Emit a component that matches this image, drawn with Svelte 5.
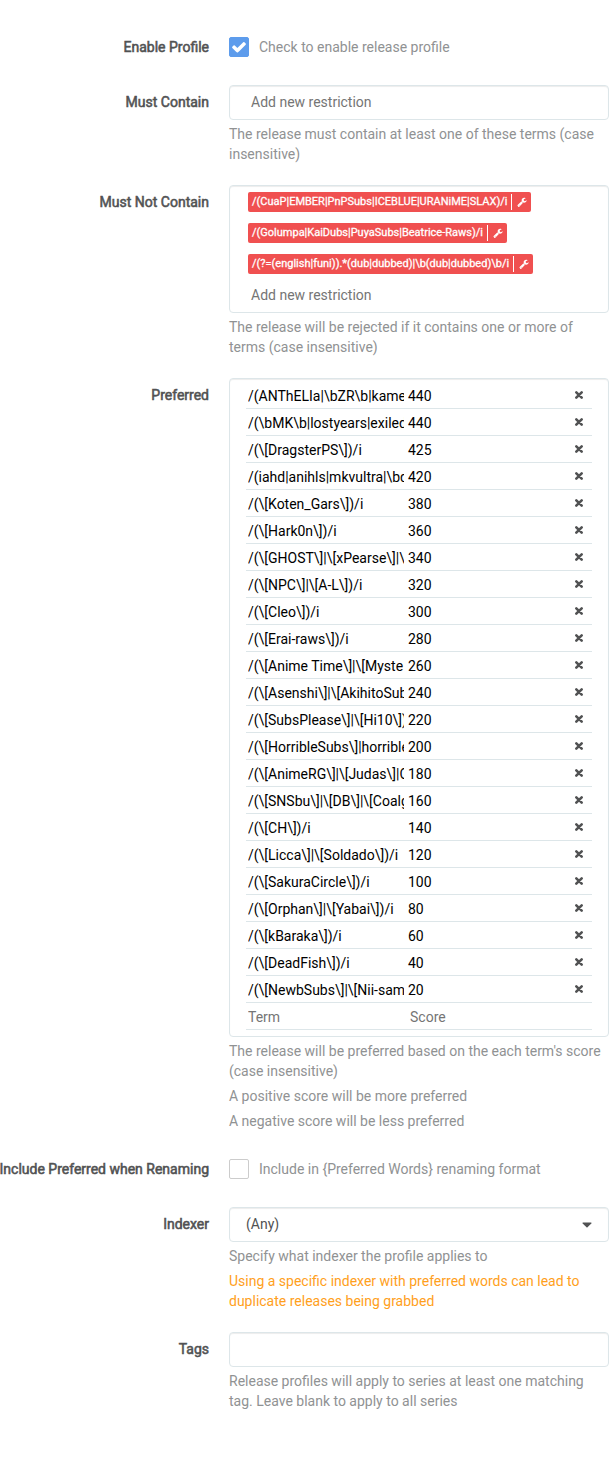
<script>
  const restrictions = [
    '/(CuaP|EMBER|PnPSubs|ICEBLUE|URANiME|SLAX)/i',
    '/(Golumpa|KaiDubs|PuyaSubs|Beatrice-Raws)/i',
    '/(?=(english|funi)).*(dub|dubbed)|\\b(dub|dubbed)\\b/i'
  ];
  const preferred = [
    ['/(ANThELIa|\\bZR\\b|kame', 440],
    ['/(\\bMK\\b|lostyears|exiled', 440],
    ['/(\\[DragsterPS\\])/i', 425],
    ['/(iahd|anihls|mkvultra|\\bd', 420],
    ['/(\\[Koten_Gars\\])/i', 380],
    ['/(\\[Hark0n\\])/i', 360],
    ['/(\\[GHOST\\]|\\[xPearse\\]|\\', 340],
    ['/(\\[NPC\\]|\\[A-L\\])/i', 320],
    ['/(\\[Cleo\\])/i', 300],
    ['/(\\[Erai-raws\\])/i', 280],
    ['/(\\[Anime Time\\]|\\[Myste', 260],
    ['/(\\[Asenshi\\]|\\[AkihitoSub', 240],
    ['/(\\[SubsPlease\\]|\\[Hi10\\])', 220],
    ['/(\\[HorribleSubs\\]|horrible', 200],
    ['/(\\[AnimeRG\\]|\\[Judas\\]|C', 180],
    ['/(\\[SNSbu\\]|\\[DB\\]|\\[Coalg', 160],
    ['/(\\[CH\\])/i', 140],
    ['/(\\[Licca\\]|\\[Soldado\\])/i', 120],
    ['/(\\[SakuraCircle\\])/i', 100],
    ['/(\\[Orphan\\]|\\[Yabai\\])/i', 80],
    ['/(\\[kBaraka\\])/i', 60],
    ['/(\\[DeadFish\\])/i', 40],
    ['/(\\[NewbSubs\\]|\\[Nii-sam', 20]
  ];
</script>

<form class="profile">
  <div class="group">
    <span class="label">Enable Profile</span>
    <div class="control check">
      <span class="box checked">
        <svg viewBox="0 0 1792 1792" width="16" height="16"><path fill="#fff" d="M1671 566q0 40-28 68l-724 724-136 136q-28 28-68 28t-68-28l-136-136-362-362q-28-28-28-68t28-68l136-136q28-28 68-28t68 28l294 295 656-657q28-28 68-28t68 28l136 136q28 28 28 68z" /></svg>
      </span>
      <span class="hint">Check to enable release profile</span>
    </div>
  </div>

  <div class="group">
    <span class="label">Must Contain</span>
    <div class="control">
      <div class="field new">Add new restriction</div>
      <p>The release must contain at least one of these terms (case insensitive)</p>
    </div>
  </div>

  <div class="group">
    <span class="label">Must Not Contain</span>
    <div class="control">
      <div class="field tags">
        {#each restrictions as term}
          <div class="tag">
            <span class="term-text">{term}</span>
            <span class="edit">
              <svg viewBox="0 0 1664 1792" width="10" height="10"><path fill="#fff" d="M384 1472q0-26-19-45t-45-19-45 19-19 45 19 45 45 19 45-19 19-45zm644-420l-682 682q-37 37-90 37-52 0-91-37l-106-108q-38-36-38-90 0-53 38-91l681-681q39 98 114.500 173.500t173.500 114.500zm634-435q0 39-23 106-47 134-164.500 217.500t-258.500 83.500q-185 0-316.500-131.500t-131.500-316.500 131.500-316.500 316.500-131.500q58 0 121.500 16.500t107.500 46.500q16 11 16 28t-16 28l-293 169v224l193 107q5-3 79-48.500t135.500-81 70.500-35.500q15 0 23.500 10t8.500 25z" /></svg>
            </span>
          </div>
        {/each}
        <div class="add">Add new restriction</div>
      </div>
      <p class="narrow">The release will be rejected if it contains one or more of terms (case insensitive)</p>
    </div>
  </div>

  <div class="group">
    <span class="label">Preferred</span>
    <div class="control">
      <div class="field list">
        {#each preferred as [term, score]}
          <div class="row">
            <span class="term">{term}</span>
            <span class="score">{score}</span>
            <svg class="remove" viewBox="0 0 8 8" width="8" height="8"><path d="M1.300 1.300L6.700 6.700M6.700 1.300L1.300 6.700" stroke="#515253" stroke-width="2.600" stroke-linecap="round" /></svg>
          </div>
        {/each}
        <div class="row empty">
          <span class="term">Term</span>
          <span class="score">Score</span>
        </div>
      </div>
      <p>The release will be preferred based on the each term's score (case insensitive)</p>
      <p>A positive score will be more preferred</p>
      <p>A negative score will be less preferred</p>
    </div>
  </div>

  <div class="group">
    <span class="label">Include Preferred when Renaming</span>
    <div class="control check">
      <span class="box"></span>
      <span class="hint">Include in &#123;Preferred Words&#125; renaming format</span>
    </div>
  </div>

  <div class="group">
    <span class="label">Indexer</span>
    <div class="control">
      <div class="field select">
        <span>(Any)</span>
        <svg viewBox="0 0 10 6" width="10" height="6"><path fill="#515253" d="M1 .5h8q.8.200.300.900L5.500 5.200q-.5.400-1 0L.7 1.400Q.2.700 1 .5z" /></svg>
      </div>
      <p>Specify what indexer the profile applies to</p>
      <p class="warning">Using a specific indexer with preferred words can lead to duplicate releases being grabbed</p>
    </div>
  </div>

  <div class="group">
    <span class="label">Tags</span>
    <div class="control">
      <div class="field"></div>
      <p>Release profiles will apply to series at least one matching tag. Leave blank to apply to all series</p>
    </div>
  </div>
</form>

<style>
  :global(body) {
    background: #fff;
  }
  .profile {
    box-sizing: border-box;
    width: 609px;
    height: 1462px;
    padding-top: 30px;
    display: flex;
    flex-direction: column;
    gap: 20px;
    overflow: hidden;
    font: 14px/20px Roboto, sans-serif;
    color: #515253;
  }
  .group {
    display: grid;
    grid-template-columns: 209px 380px;
    column-gap: 20px;
  }
  .label {
    padding-top: 7px;
    justify-self: end;
    white-space: nowrap;
    -webkit-text-stroke: 0.55px #515253;
  }
  .check {
    box-sizing: border-box;
    display: flex;
    align-items: flex-start;
    gap: 10px;
    height: 35px;
    padding-top: 7px;
  }
  .box {
    box-sizing: border-box;
    width: 20px;
    height: 20px;
    display: flex;
    align-items: center;
    justify-content: center;
    border: 1px solid #ccc;
    border-radius: 2px;
  }
  .checked {
    background: #5d9cec;
    border-color: #5d9cec;
  }
  .hint,
  p {
    color: #909293;
  }
  p {
    margin: 5px 0 0;
  }
  .field + p {
    margin-top: 4px;
  }
  p:last-child {
    margin-bottom: 1px;
  }
  .narrow {
    width: 360px;
  }
  .warning {
    color: #ffa01c;
  }
  .field {
    box-sizing: border-box;
    min-height: 35px;
    padding: 6px 16px;
    border: 1px solid #dde6e9;
    border-radius: 4px;
    box-shadow: inset 0 1px 1px rgba(0, 0, 0, 0.075);
  }
  .new {
    padding-left: 21px;
    color: #757575;
  }
  .tags {
    height: 128px;
    padding: 6px 18px;
    display: flex;
    flex-direction: column;
    align-items: flex-start;
    gap: 11px;
  }
  .tag {
    box-sizing: border-box;
    height: 20px;
    padding: 0 4px;
    display: flex;
    align-items: center;
    border-radius: 2px;
    background: #f05050;
    color: #fff;
    font-size: 11px;
    line-height: 18px;
    white-space: nowrap;
    -webkit-text-stroke: 0.3px #fff;
  }
  .edit {
    display: flex;
    align-items: center;
    height: 16px;
    margin-left: 4px;
    padding-left: 5px;
    border-left: 1px solid #fff;
  }
  .add {
    padding-left: 3px;
    color: #757575;
  }
  .list {
    height: 659px;
    padding: 3px 16px 6px;
  }
  .row {
    box-sizing: border-box;
    height: 27px;
    padding: 4px 9px 2px 2px;
    display: grid;
    grid-template-columns: 156px 1fr 8px;
    column-gap: 4px;
    border-bottom: 1px solid #dde6e9;
    color: #000;
  }
  .term {
    overflow: hidden;
    white-space: nowrap;
  }
  .remove {
    margin-top: 5px;
    overflow: visible;
  }
  .empty {
    color: #757575;
  }
  .empty .score {
    padding-left: 2px;
  }
  .select {
    display: flex;
    align-items: flex-start;
    justify-content: space-between;
  }
  .select svg {
    margin-top: 8px;
  }
</style>
